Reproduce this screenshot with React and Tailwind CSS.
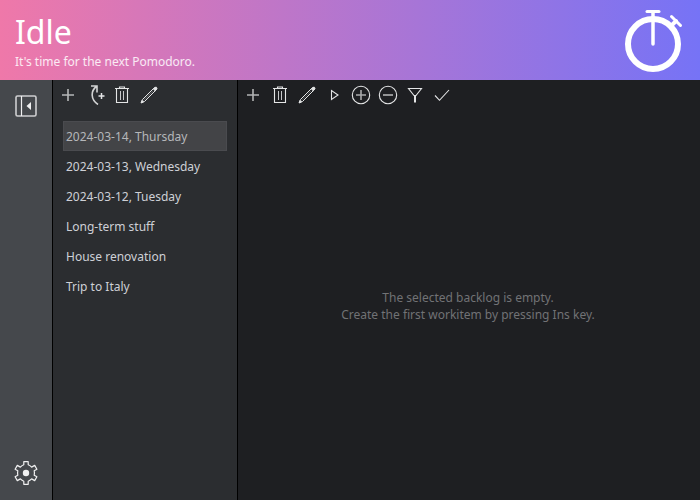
import React from "react";

function Icon({ size = 20, className = "h-5 w-5", children }) {
  return (
    <svg
      viewBox={`0 0 ${size} ${size}`}
      className={className}
      fill="none"
      stroke="currentColor"
      strokeWidth="1"
      aria-hidden="true"
    >
      {children}
    </svg>
  );
}

const icons = {
  add: <path d="M10 4v12M4 10h12" strokeWidth="1.6" opacity="0.75" />,
  addFrom: (
    <>
      <path d="M6 1h6v6.500M11.500 1.500C5.500 6 5.500 14.500 13 19.500" strokeWidth="1.600" opacity="0.9" />
      <path d="M16.500 8v6M13.500 11h6" strokeWidth="1.500" />
    </>
  ),
  remove: (
    <>
      <path d="M3 3.500h14M7.500 3.500V2h5v1.500M4.500 3.500v14h11v-14" strokeWidth="1.1" />
      <path d="M8.500 6v9M11.500 6v9" opacity="0.85" />
    </>
  ),
  edit: (
    <>
      <path d="M2.500 17.500l1-3L14.500 3.500q1.500-1.500 2.500-.5t-.5 2.500L5.500 16.500z" strokeWidth="1" />
      <path d="M4.500 15.500L14 6" strokeWidth="0.7" opacity="0.4" />
      <path d="M14.300 4L16 2.300h1.500l.5 1.500-1.800 2zM2 18l1-2.500L4.500 17z" fill="currentColor" />
    </>
  ),
  play: <path d="M7.500 5.500v9l6.500-4.500z" strokeWidth="1.1" />,
  circlePlus: (
    <>
      <circle cx="10" cy="10" r="8.700" strokeWidth="1.1" />
      <path d="M10 5v10M5 10h10" strokeWidth="1.6" opacity="0.7" />
    </>
  ),
  circleMinus: (
    <>
      <circle cx="10" cy="10" r="8.700" strokeWidth="1.1" />
      <path d="M5 10h10" strokeWidth="1.700" opacity="0.7" />
    </>
  ),
  filter: (
    <>
      <path d="M3.500 3.500h13L11 10.500H9z" strokeWidth="1.1" />
      <path d="M10 10v7.500" strokeWidth="2" />
    </>
  ),
  check: <path d="M3 10.500l4.500 4.800L17 5" strokeWidth="1.1" />,
};

function ToolButton({ label, icon }) {
  return (
    <button type="button" aria-label={label} className="h-5 w-5 shrink-0 text-[#e4e5e6]">
      <Icon>{icons[icon]}</Icon>
    </button>
  );
}

function Toolbar({ items }) {
  return (
    <div role="toolbar" className="flex h-[30px] shrink-0 items-center gap-[7px] px-[5px]">
      {items.map(([label, icon]) => (
        <ToolButton key={label} label={label} icon={icon} />
      ))}
    </div>
  );
}

const backlogs = [
  "2024-03-14, Thursday",
  "2024-03-13, Wednesday",
  "2024-03-12, Tuesday",
  "Long-term stuff",
  "House renovation",
  "Trip to Italy",
];

export default function App() {
  return (
    <div className="flex min-h-screen flex-col bg-[#1e1f22] font-['Noto_Sans',sans-serif] text-xs text-[#ced0d6]">
      <header className="flex h-20 shrink-0 items-center justify-between bg-linear-to-r/srgb from-[#ef78a9] to-[#7673f6] px-[15px] text-white">
        <div className="pt-1">
          <h1 className="text-[32px] leading-10">Idle</h1>
          <p className="leading-5 text-white/85">It's time for the next Pomodoro.</p>
        </div>
        <svg viewBox="0 0 64 64" className="h-16 w-16" fill="none" stroke="currentColor" strokeLinecap="round" aria-hidden="true">
          <circle cx="32" cy="36" r="25" strokeWidth="6" />
          <path d="M26 3.500h12" strokeWidth="3" />
          <path d="M32 4v32" strokeWidth="3.500" />
          <path d="M50.500 8.500l9 9" strokeWidth="3" />
          <path d="M51 17l4-4" strokeWidth="4" />
        </svg>
      </header>

      <div className="flex flex-1">
        <nav className="flex w-[53px] shrink-0 flex-col items-center justify-between border-r border-black bg-[#45484c] pt-[14px] pb-[15px] text-[#f0f0f1]">
          <button type="button" aria-label="Hide backlogs" className="h-6 w-6">
            <Icon size={24} className="h-6 w-6">
              <rect x="2" y="2" width="20" height="20" rx="1.500" strokeWidth="1.600" opacity="0.8" />
              <path d="M7.500 2v20" strokeWidth="1.200" />
              <path d="M17 8v8l-4.500-4z" fill="currentColor" stroke="none" />
            </Icon>
          </button>
          <button type="button" aria-label="Settings" className="h-6 w-6">
            <Icon size={24} className="h-6 w-6">
              <path
                transform="translate(12 12)"
                d="M-2.200-11.300H2.200V-8.200Q4-7.500 5.600-5.900L8.700-7.600 10.900-3.800 8.200-2.200Q8.700 0 8.200 2.200L10.900 3.800 8.700 7.600 5.600 5.900Q4 7.500 2.200 8.200V11.300H-2.200V8.200Q-4 7.500-5.600 5.900L-8.700 7.600-10.900 3.800-8.200 2.200Q-8.700 0-8.200-2.200L-10.900-3.800-8.700-7.600-5.600-5.900Q-4-7.500-2.200-8.200Z"
                strokeWidth="1.200"
                strokeLinejoin="round"
              />
              <circle cx="12" cy="12" r="3.200" fill="currentColor" stroke="none" />
            </Icon>
          </button>
        </nav>

        <aside className="w-[185px] shrink-0 border-r border-black bg-[#2b2d30]">
          <Toolbar
            items={[
              ["New backlog", "add"],
              ["New backlog from incomplete", "addFrom"],
              ["Delete backlog", "remove"],
              ["Rename backlog", "edit"],
            ]}
          />
          <ul className="px-[10px] pt-[11px]">
            {backlogs.map((name, i) => (
              <li key={name}>
                <button
                  type="button"
                  className={
                    i === 0
                      ? "block h-[30px] w-full border border-[#4a4b4f] bg-[#434447] px-0.5 pt-0.5 text-left text-[#b5b7ba]"
                      : "block h-[30px] w-full border border-transparent px-0.5 pt-0.5 text-left"
                  }
                >
                  {name}
                </button>
              </li>
            ))}
          </ul>
        </aside>

        <main className="flex min-w-0 flex-1 flex-col">
          <Toolbar
            items={[
              ["New item", "add"],
              ["Delete item", "remove"],
              ["Rename item", "edit"],
              ["Start", "play"],
              ["Add pomodoro", "circlePlus"],
              ["Remove pomodoro", "circleMinus"],
              ["Filter", "filter"],
              ["Complete", "check"],
            ]}
          />
          <div className="flex flex-1 items-center justify-center pt-0.5 pr-0.5 text-center leading-[17px] text-[#717275]">
            <p>
              The selected backlog is empty.
              <br />
              Create the first workitem by pressing Ins key.
            </p>
          </div>
        </main>
      </div>
    </div>
  );
}
